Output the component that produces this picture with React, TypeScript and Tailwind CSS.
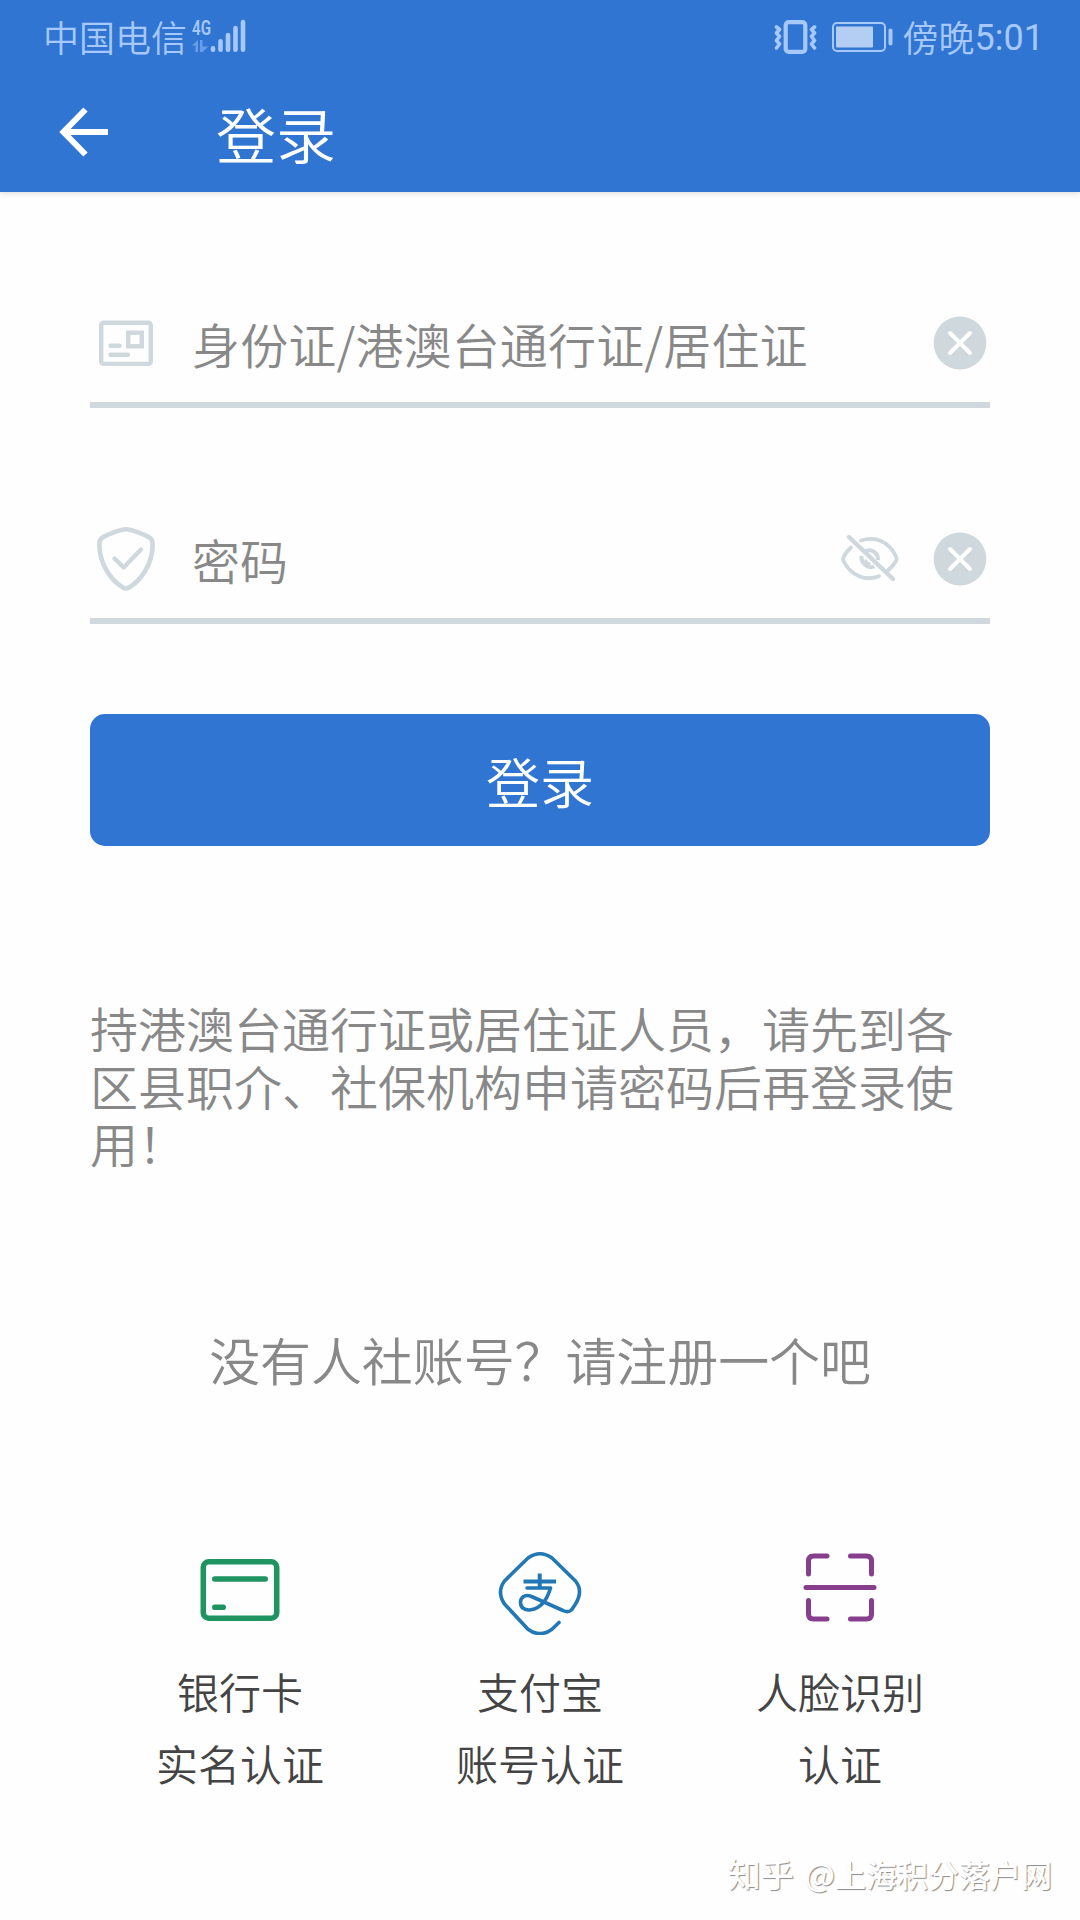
import React from "react";

function SignalIcon() {
  return (
    <svg width="56" height="38" viewBox="0 0 56 38" className="shrink-0 overflow-visible">
      <text x="0" y="17" fontFamily="Roboto" fontSize="21" fontWeight="600" textLength="19" lengthAdjust="spacingAndGlyphs" fill="#a6c8fb">
        4G
      </text>
      <path d="M0 27.5 L6 22 V34 H3.5 V27.5Z M8 22 H10.5 V28.5 H16.5 L10.5 34 H8Z" fill="#6a9de8" />
      <g stroke="#a6c8fb" strokeWidth="4.6" strokeLinecap="round">
        <path d="M21 31.7V30.2M28.5 31.7V23.3M36 31.7V17M43.5 31.7V10M51 31.7V4" />
      </g>
    </svg>
  );
}

function VibrateIcon() {
  return (
    <svg width="44" height="36" viewBox="0 0 44 36" fill="none" stroke="#a6c8fb" className="shrink-0">
      <rect x="11.7" y="3.2" width="19.6" height="29.6" rx="3" strokeWidth="4.2" />
      <path d="M2.500 8L5.500 10.5L2.500 14L5.500 17.5L2.500 21.5L5.500 25L2.500 29M40.500 8L37.500 10.5L40.500 14L37.500 17.5L40.500 21.5L37.500 25L40.500 29" strokeWidth="3.6" strokeLinecap="round" strokeLinejoin="round" />
    </svg>
  );
}

function BatteryIcon() {
  return (
    <svg width="62" height="30" viewBox="0 0 62 30" fill="none" className="shrink-0">
      <rect x="1" y="1" width="52" height="28" rx="4" stroke="#a6c8fb" strokeWidth="2" />
      <rect x="4" y="4.500" width="37" height="21" rx="1" fill="#b4cdf2" />
      <rect x="56.500" y="6.500" width="4" height="17" rx="2" fill="#a6c8fb" />
    </svg>
  );
}

function BackIcon() {
  return (
    <svg width="50" height="50" viewBox="0 0 50 50" fill="none" stroke="#fff" strokeWidth="6">
      <path d="M26.500 2.500L4.500 25L26.500 47.500M4.500 25H49" />
    </svg>
  );
}

function IdCardIcon() {
  return (
    <svg width="72" height="72" viewBox="0 0 72 72" fill="none" stroke="#ced8dd" strokeWidth="4.4" className="shrink-0">
      <rect x="11.200" y="16.700" width="49.600" height="41.200" rx="2.500" />
      <rect x="38.200" y="26.700" width="13.600" height="13.600" />
      <path d="M20.500 39.700H29.500M20.500 48.700H38" strokeLinecap="round" />
    </svg>
  );
}

function ShieldIcon() {
  return (
    <svg width="72" height="72" viewBox="0 0 72 72" fill="none" stroke="#ced8dd" strokeWidth="4.600" strokeLinecap="round" strokeLinejoin="round" className="shrink-0">
      <path d="M36 7.300C31 7.300 18 12 12.500 15.500C10 17 9.300 19 9.300 22C9.300 43 22 59 33 65.500Q36 67.500 39 65.500C50 59 62.700 43 62.700 22C62.700 19 62 17 59.500 15.500C54 12 41 7.300 36 7.300Z" />
      <path d="M24.500 36.500L33.700 45.500L51 27.500" strokeWidth="4.400" />
    </svg>
  );
}

function EyeOffIcon() {
  return (
    <svg width="60" height="52" viewBox="0 0 60 52" fill="none" stroke="#ced8dd" strokeWidth="3.800" strokeLinecap="round" className="shrink-0">
      <path d="M21 7.500C36 3 49 8.500 56 23.500Q57.200 26 56 28C53.800 32 50.800 35 48 37.500" />
      <path d="M11 14.500C8 17 5 21 3.500 24Q2.700 26 3.500 28C11 43 26 48.500 39 43.300" />
      <path d="M9 4L53 46" strokeWidth="4.400" />
      <path d="M25 18.500C31 15 38.500 19.500 38 27" strokeWidth="4" strokeLinecap="butt" />
      <path d="M21.500 23C21 30.500 28 36 34.500 33.500" strokeWidth="4" strokeLinecap="butt" />
      <path d="M25.500 26.500Q26 30 30.500 31" strokeWidth="2.500" strokeLinecap="butt" />
    </svg>
  );
}

function ClearIcon() {
  return (
    <svg width="54" height="54" viewBox="0 0 54 54" className="mt-[1px] mr-[3px] shrink-0">
      <circle cx="27" cy="27" r="26.400" fill="#ced8dd" />
      <path d="M17 17L37 37M37 17L17 37" stroke="#fff" strokeWidth="4" strokeLinecap="round" />
    </svg>
  );
}

function BankCardIcon() {
  return (
    <svg width="90" height="90" viewBox="0 0 90 90" fill="none" stroke="#1f9360" strokeWidth="5.600" strokeLinecap="round">
      <rect x="8.300" y="16.800" width="73.400" height="56.400" rx="5.500" />
      <path d="M19.800 34H70.200M19.800 62.200H28.200" />
    </svg>
  );
}

function AlipayIcon() {
  return (
    <svg width="90" height="90" viewBox="0 0 90 90" fill="none" stroke="#2278b4" strokeWidth="3.600" strokeLinecap="round" strokeLinejoin="round">
      <path d="M64 77.500L57 84.200Q45 93 33 84.200L9.500 59Q1.500 47 9.500 36L33 13Q45 4.500 57 13L80.500 36Q88.500 46 80.500 59L76.500 65Q73 68 68 65.500L36.500 51.500C29 48.500 25.500 53 25.500 57.500C25.500 63 30 65.800 36 64.800C46.500 63 52 55 55.500 43H32" />
      <path d="M28.500 36.500H61M44.700 28.500V42" strokeWidth="4" strokeLinecap="butt" />
    </svg>
  );
}

function FaceScanIcon() {
  return (
    <svg width="90" height="90" viewBox="0 0 90 90" fill="none" stroke="#873e8d" strokeWidth="5" strokeLinecap="round">
      <path d="M13.500 29V16Q13.500 11 18.500 11H32M55.500 11H71.500Q76.500 11 76.500 16V29M13.500 55.500V69Q13.500 74 18.500 74H32M55.500 74H71.500Q76.500 74 76.500 69V55.500" />
      <path d="M11 42.500H79" />
    </svg>
  );
}

const methods = [
  { icon: <BankCardIcon />, title: "银行卡", subtitle: "实名认证" },
  { icon: <AlipayIcon />, title: "支付宝", subtitle: "账号认证" },
  { icon: <FaceScanIcon />, title: "人脸识别", subtitle: "认证" },
];

export default function App() {
  return (
    <div className="flex h-[1920px] w-[1080px] flex-col overflow-hidden bg-[#fefefe] font-['Noto_Sans_CJK_SC',sans-serif] [font-weight:350]">
      <header className="h-[192px] shrink-0 bg-[#3075d1] shadow-[0_1px_6px_rgba(0,0,0,0.15)]">
        <div className="flex h-[74px] items-center justify-between pr-[36px] pl-[43px] text-[36px] leading-none text-[#a6c8fb]">
          <div className="flex items-center">
            <span className="mb-[3px]">中国电信</span>
            <span className="ml-[5px]"><SignalIcon /></span>
          </div>
          <div className="flex items-center">
            <VibrateIcon />
            <span className="ml-[14px]"><BatteryIcon /></span>
            <span className="mb-[3px] ml-[9px]">傍晚</span>
            <span className="mt-[2px] font-[Roboto] font-normal">5:01</span>
          </div>
        </div>
        <div className="flex h-[118px] items-center pl-[59px]">
          <div className="mb-[2px]"><BackIcon /></div>
          <h1 className="ml-[107px] text-[60px] leading-none text-white [font-weight:350]">登录</h1>
        </div>
      </header>

      <main className="flex flex-col px-[90px]">
        <div className="flex h-[216px] items-center border-b-[6px] border-[#ced8dd] pt-[90px]">
          <IdCardIcon />
          <span className="mt-[2px] ml-[30px] flex-1 text-[48px] leading-none tracking-[0.15px] text-[#888]">身份证/港澳台通行证/居住证</span>
          <ClearIcon />
        </div>
        <div className="flex h-[216px] items-center border-b-[6px] border-[#ced8dd] pt-[90px]">
          <ShieldIcon />
          <span className="mt-[2px] ml-[30px] flex-1 text-[48px] leading-none text-[#888]">密码</span>
          <span className="mt-[2px] mr-[33px]"><EyeOffIcon /></span>
          <ClearIcon />
        </div>

        <button className="mt-[90px] flex h-[132px] items-center justify-center rounded-[15px] bg-[#3075d1] pt-[2px] text-[54px] leading-none text-white [font-weight:350]">
          登录
        </button>

        <p className="mt-[153px] text-[48px] leading-[57.600px] whitespace-nowrap text-[#888]">
          持港澳台通行证或居住证人员，请先到各
          <br />
          区县职介、社保机构申请密码后再登录使
          <br />
          用！
        </p>

        <p className="mt-[127px] text-center text-[51px] leading-[120px] tracking-[-0.1px] text-[#888]">没有人社账号？请注册一个吧</p>

        <div className="mt-[126px] grid grid-cols-3">
          {methods.map((m) => (
            <div key={m.title} className="flex flex-col items-center text-[42px] leading-[72px] text-[#444]">
              {m.icon}
              <span className="mt-[20px]">{m.title}</span>
              <span>{m.subtitle}</span>
            </div>
          ))}
        </div>
      </main>

      <footer className="mt-auto flex h-[94px] items-center justify-end gap-[11px] pr-[28px] text-[31px] leading-none font-medium text-white [text-shadow:1px_1px_1px_#8a8a8a]">
        <span className="text-[33px]">知乎</span>
        <span>@上海积分落户网</span>
      </footer>
    </div>
  );
}
